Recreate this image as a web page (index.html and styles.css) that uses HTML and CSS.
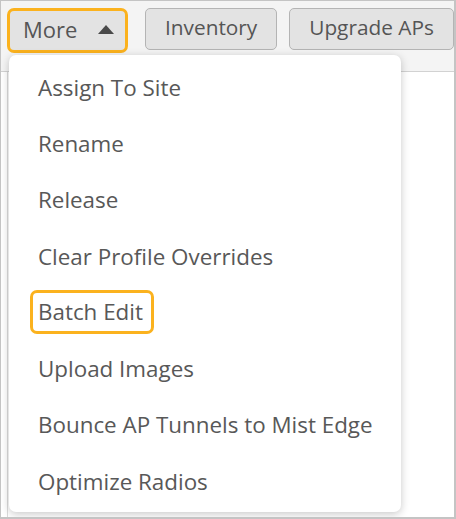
FILE: index.html
```html
<!DOCTYPE html>
<html>
<head>
<meta charset="utf-8">
<link rel="stylesheet" href="styles.css">
</head>
<body>
<div class="frame">
  <div class="toolbar">
    <button class="btn btn-more"><span>More</span><span class="caret"></span></button>
    <button class="btn">Inventory</button>
    <button class="btn">Upgrade APs</button>
  </div>
  <div class="content"></div>
  <ul class="menu">
    <li>Assign To Site</li>
    <li>Rename</li>
    <li>Release</li>
    <li>Clear Profile Overrides</li>
    <li><span class="hl">Batch Edit</span></li>
    <li>Upload Images</li>
    <li>Bounce AP Tunnels to Mist Edge</li>
    <li>Optimize Radios</li>
  </ul>
</div>
</body>
</html>
```

FILE: styles.css
```css
html, body {
  margin: 0;
  padding: 0;
  background: #fff;
}
.frame {
  position: relative;
  width: 456px;
  height: 519px;
  box-sizing: border-box;
  border: 1px solid #c4c4c4;
  border-right-width: 2px;
  border-bottom-width: 2px;
  font-family: "Open Sans", "Noto Sans", sans-serif;
  display: flex;
  flex-direction: column;
  overflow: hidden;
}
.toolbar {
  height: 71px;
  box-sizing: border-box;
  background: #f4f4f4;
  border-bottom: 1px solid #d2d2d2;
  display: flex;
  align-items: flex-start;
  gap: 12px;
  padding: 7px 0 0 6px;
}
.btn {
  font-family: inherit;
  font-size: 20.8px;
  color: #555;
  background: #e3e3e3;
  border: 1px solid #b4b4b4;
  border-radius: 5px;
  height: 42px;
  margin-top: 0;
  padding: 0 19px 3px;
  line-height: 1;
}
.btn-more {
  height: 45px;
  border: 3px solid #fbb21e;
  border-radius: 7px;
  font-size: 22px;
  padding: 0 10px 4px 13px;
  display: flex;
  align-items: center;
  gap: 21px;
  width: 121px;
  margin-right: 5px;
}
.caret {
  width: 0;
  height: 0;
  border-left: 8px solid transparent;
  border-right: 8px solid transparent;
  border-bottom: 9px solid #4a4a4a;
  margin-top: 2px;
}
.content {
  flex: 1;
  border-left: 1px solid #dcdcdc;
  margin-left: 6px;
}
.menu {
  position: absolute;
  left: 8px;
  top: 54px;
  width: 392px;
  margin: 0;
  padding: 4px 0 0;
  list-style: none;
  background: #fff;
  border-radius: 7px;
  box-shadow: 0 2px 8px rgba(0,0,0,0.22);
  height: 457px;
  box-sizing: border-box;
}
.menu li {
  height: 56.3px;
  display: flex;
  align-items: center;
  padding-left: 29px;
  font-size: 22.4px;
  color: #585858;
}
.hl {
  display: inline-block;
  border: 3px solid #fbb21e;
  border-radius: 7px;
  line-height: 38px;
  height: 38px;
  padding: 0 8px 0 5px;
  margin-left: -8px;
}
```
